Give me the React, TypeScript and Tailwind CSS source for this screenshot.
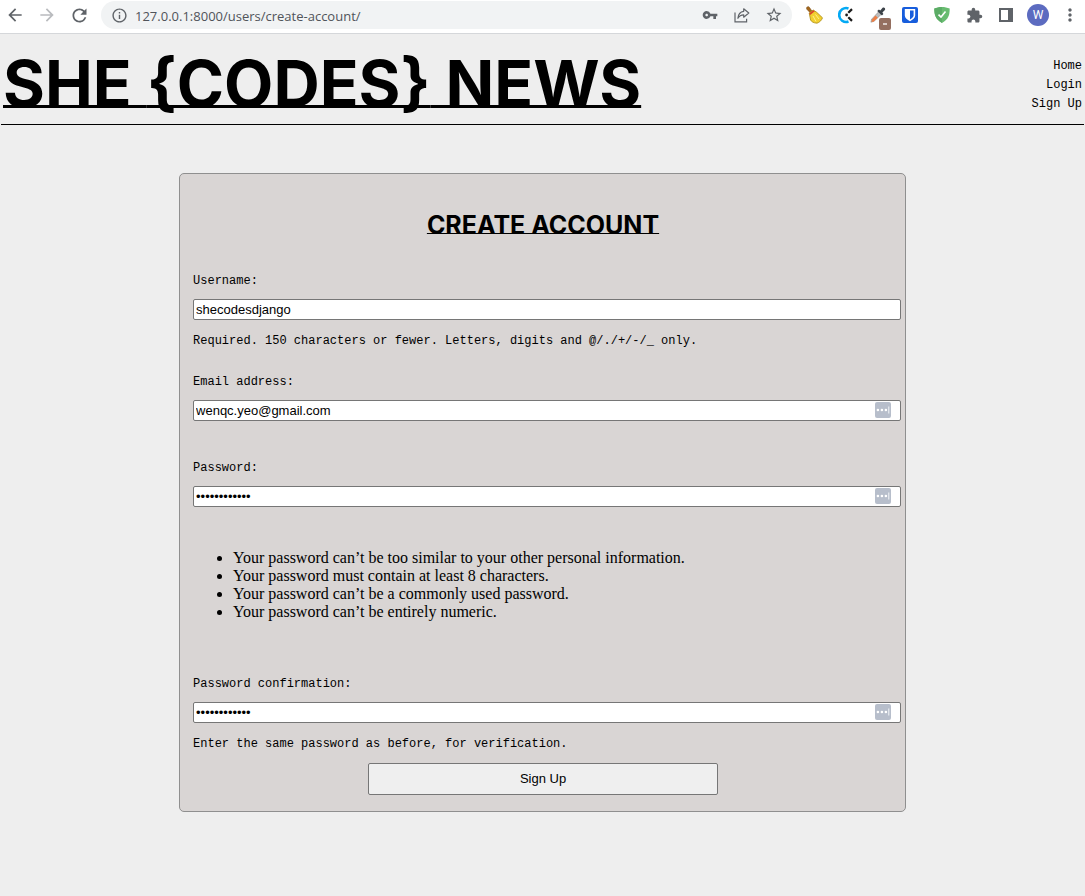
import type { ReactNode } from "react";
import {
  MdArrowBack,
  MdArrowForward,
  MdExtension,
  MdInfoOutline,
  MdMoreVert,
  MdRefresh,
  MdStarBorder,
  MdVpnKey,
} from "react-icons/md";

function ToolButton({ label, children }: { label: string; children: ReactNode }) {
  return (
    <button
      type="button"
      aria-label={label}
      className="relative flex size-[22px] shrink-0 items-center justify-center text-[#5f6368]"
    >
      {children}
    </button>
  );
}

function ShareIcon() {
  return (
    <svg width="16" height="16" viewBox="0 0 16 16" fill="none" stroke="currentColor" strokeWidth="1.2">
      <path d="M1 5.5v9.3h11.6v-3" />
      <path d="M9.7 1.8 14.8 6l-5.100 4.200V7.800C7 7.800 5.200 8.900 3.900 11.300 4.200 7.600 6.200 4.700 9.700 4.300Z" strokeLinejoin="round" />
    </svg>
  );
}

function BroomIcon() {
  return (
    <svg width="18" height="18" viewBox="0 0 18 18">
      <path d="M1.800 1.200C3 .4 4 .4 4.500 1.500L7 5.200 5.200 6.700 1.600 3Z" fill="#a5681c" stroke="#7a4a10" strokeWidth=".6" />
      <path d="m4.200 7 4-3 3.500 2.300 5.800 5.500c-1 2.700-3 4.600-5.500 5.400-3.500-.2-5.500-1.500-6.400-3.200Z" fill="#f2cf2f" stroke="#a88a18" strokeWidth=".8" />
      <path d="m4.300 7.200 4.100-3 1.400 1-4.600 3.700Z" fill="#d9442b" />
      <path d="m8 10 3 5.500M10.500 8.500l3.500 4.500" stroke="#fff08a" strokeWidth="1" />
    </svg>
  );
}

function ClockifyIcon() {
  return (
    <svg width="16" height="18" viewBox="0 0 16 18" fill="none">
      <path d="M10.500 2.400A7 7 0 1 0 10.500 15.600" stroke="#03a9f4" strokeWidth="2.600" />
      <path d="m10.300 6.800 3.700-3.700M10.300 11.200l3.700 3.700" stroke="#1b1b1b" strokeWidth="2.200" />
      <circle cx="8.600" cy="9" r="1.400" fill="#1b1b1b" />
    </svg>
  );
}

function DropperIcon() {
  return (
    <svg width="18" height="18" viewBox="0 0 18 18">
      <path d="m9.800 5.600 2.600 2.600-7.500 7.200-3 .8.700-3Z" fill="#bdbdbd" stroke="#8a8a8a" strokeWidth=".6" />
      <path d="m6.500 9.500 2.300 2.300-4 3.600-2.300.5.500-2.500Z" fill="#ef7f45" />
      <path d="m8.200 4.900 1.700-1.500 1.400 1 2.300-2.700c1.500-1 3.300.7 2.300 2.300l-2.500 2.400 1 1.500-1.500 1.500Z" fill="#3b4248" />
    </svg>
  );
}

function VaultIcon() {
  return (
    <svg width="16" height="16" viewBox="0 0 16 16">
      <rect width="16" height="16" rx="2" fill="#175ddc" />
      <path d="M2.800 2h10.400v6.500c0 2.500-2.500 4.300-5.200 5.700-2.700-1.400-5.200-3.200-5.200-5.700Z" fill="#fff" />
      <path d="M8 3.600h3.600v5c0 1.500-1.500 2.700-3.600 3.900Z" fill="#175ddc" />
    </svg>
  );
}

function ShieldIcon() {
  return (
    <svg width="16" height="16" viewBox="0 0 16 16">
      <path d="M8 0c2.600 0 5.300.5 7.700 1.600C15.700 8 14.500 12.300 8 16 1.500 12.300.3 8 .3 1.600 2.700.5 5.400 0 8 0Z" fill="#68bc71" />
      <path d="M8 0C5.400 0 2.700.5.300 1.600.3 8 1.500 12.300 8 16Z" fill="#5cac66" />
      <path d="m4.500 7.600 2.500 2.500 4.500-5.500" fill="none" stroke="#fff" strokeWidth="1.600" />
    </svg>
  );
}

function SidePanelIcon() {
  return (
    <svg width="14" height="14" viewBox="0 0 14 14" fill="none">
      <rect x="1" y="1" width="12" height="12" stroke="currentColor" strokeWidth="2" />
      <path d="M9 1h4v12H9Z" fill="currentColor" />
    </svg>
  );
}

function FillIcon() {
  return (
    <svg width="16" height="16" viewBox="0 0 16 16">
      <rect width="16" height="16" rx="2" fill="#b7becb" />
      <circle cx="2.900" cy="8" r="1.300" fill="#fff" />
      <circle cx="6.900" cy="8" r="1.300" fill="#fff" />
      <circle cx="10.900" cy="8" r="1.300" fill="#fff" />
      <path d="M13.700 4.500v7" stroke="#e1e5eb" strokeWidth="1.400" />
    </svg>
  );
}

function Toolbar() {
  return (
    <div className="flex h-[34px] items-start gap-[11px] border-b border-[#d5d7da] bg-white px-1 pt-px">
      <div className="flex h-7 items-center gap-2.5">
        <ToolButton label="Back"><MdArrowBack size={20} /></ToolButton>
        <ToolButton label="Forward"><MdArrowForward size={20} className="text-[#b9bbbe]" /></ToolButton>
        <ToolButton label="Reload"><MdRefresh size={21} /></ToolButton>
      </div>
      <div className="flex h-7 min-w-0 flex-1 items-center gap-[5px] rounded-full bg-[#f1f3f4] px-[7px]">
        <ToolButton label="Site information"><MdInfoOutline size={17} /></ToolButton>
        <input
          aria-label="Address"
          defaultValue="127.0.0.1:8000/users/create-account/"
          className="h-7 min-w-0 flex-1 bg-transparent pt-px font-['Open_Sans',sans-serif] text-[13px] text-[#50545a] outline-none"
        />
        <div className="flex gap-2.5">
          <ToolButton label="Saved passwords"><MdVpnKey size={16} /></ToolButton>
          <ToolButton label="Share"><ShareIcon /></ToolButton>
          <ToolButton label="Bookmark"><MdStarBorder size={18} /></ToolButton>
        </div>
      </div>
      <div className="flex h-7 items-center gap-2.5">
        <ToolButton label="Cleaner"><BroomIcon /></ToolButton>
        <ToolButton label="Time tracker"><ClockifyIcon /></ToolButton>
        <ToolButton label="Color picker">
          <DropperIcon />
          <span className="absolute -right-0.5 -bottom-1 flex h-3 w-3 items-center justify-center rounded-xs bg-[#946f60] text-white">
            <svg width="4" height="2" viewBox="0 0 4 2"><path d="M0 1h4" stroke="currentColor" strokeWidth="1.300" /></svg>
          </span>
        </ToolButton>
        <ToolButton label="Password vault"><VaultIcon /></ToolButton>
        <ToolButton label="Ad blocker"><ShieldIcon /></ToolButton>
        <ToolButton label="Extensions"><MdExtension size={17} /></ToolButton>
        <ToolButton label="Side panel"><SidePanelIcon /></ToolButton>
        <ToolButton label="Profile">
          <span className="flex size-[22px] items-center justify-center rounded-full bg-[#5c6bc0] font-[Roboto,sans-serif] text-xs text-white">
            W
          </span>
        </ToolButton>
        <ToolButton label="Menu"><MdMoreVert size={20} /></ToolButton>
      </div>
    </div>
  );
}

const mono = "font-['Liberation_Mono',monospace] text-xs leading-[22px]";

type FieldProps = {
  id: string;
  label: string;
  type: string;
  value: string;
  fill?: boolean;
  help?: string;
};

function Field({ id, label, type, value, fill, help }: FieldProps) {
  return (
    <div>
      <label htmlFor={id} className={`block ${mono}`}>{label}</label>
      <div className="relative mt-[7px]">
        <input
          id={id}
          type={type}
          defaultValue={value}
          aria-describedby={help ? `${id}-help` : undefined}
          className="block h-[21px] w-full rounded-xs border border-[#767676] bg-white px-0.5 font-['Liberation_Sans',sans-serif] text-[13px]"
        />
        {fill && (
          <span className="absolute top-0.5 right-2.5">
            <FillIcon />
          </span>
        )}
      </div>
      {help && <p id={`${id}-help`} className={`mt-2.5 ${mono}`}>{help}</p>}
    </div>
  );
}

const rules = [
  "Your password can’t be too similar to your other personal information.",
  "Your password must contain at least 8 characters.",
  "Your password can’t be a commonly used password.",
  "Your password can’t be entirely numeric.",
];

export default function App() {
  return (
    <div className="min-h-screen bg-[#eee] text-black">
      <Toolbar />
      <header className="mx-px flex items-end justify-between border-b border-black pt-5 pr-0.5 pb-2.5 pl-0.5">
        <h1 className="font-[Inter,sans-serif] text-[64px] leading-[60px] font-bold whitespace-nowrap underline decoration-[3px] -underline-offset-2 [text-decoration-skip-ink:none]">
          SHE {"{CODES}"} NEWS
        </h1>
        <nav className="flex flex-col text-right font-['Liberation_Mono',monospace] text-xs leading-[19px]">
          <a href="#home">Home</a>
          <a href="#login">Login</a>
          <a href="#signup">Sign Up</a>
        </nav>
      </header>
      <main className="pt-12 pb-12">
        <form
          onSubmit={(e) => e.preventDefault()}
          className="mx-auto w-[67%] rounded-[5px] border border-[#8f8f8f] bg-[#d9d5d4] pt-9 pr-1 pb-4 pl-[13px]"
        >
          <h2 className="mb-[30px] pr-2 text-center font-[Inter,sans-serif] text-[25px] leading-[30px] font-bold underline decoration-1 -underline-offset-1 [text-decoration-skip-ink:none]">
            CREATE ACCOUNT
          </h2>
          <Field
            id="username"
            label="Username:"
            type="text"
            value="shecodesdjango"
            help="Required. 150 characters or fewer. Letters, digits and @/./+/-/_ only."
          />
          <div className="mt-[19px]">
            <Field id="email" label="Email address:" type="email" value="wenqc.yeo@gmail.com" fill />
          </div>
          <div className="mt-9">
            <Field id="password" label="Password:" type="password" value="shecodes1234" fill />
          </div>
          <ul className="mt-[42px] mb-[52px] list-disc pl-10 font-['Liberation_Serif',serif] text-base leading-[18px]">
            {rules.map((rule) => (
              <li key={rule}>{rule}</li>
            ))}
          </ul>
          <Field
            id="confirm"
            label="Password confirmation:"
            type="password"
            value="shecodes1234"
            fill
            help="Enter the same password as before, for verification."
          />
          <div className="mt-2 flex justify-center pr-2">
            <button
              type="submit"
              className="h-8 w-[350px] rounded-xs border border-[#767676] bg-[#efefef] font-['Liberation_Sans',sans-serif] text-[13px]"
            >
              Sign Up
            </button>
          </div>
        </form>
      </main>
    </div>
  );
}
